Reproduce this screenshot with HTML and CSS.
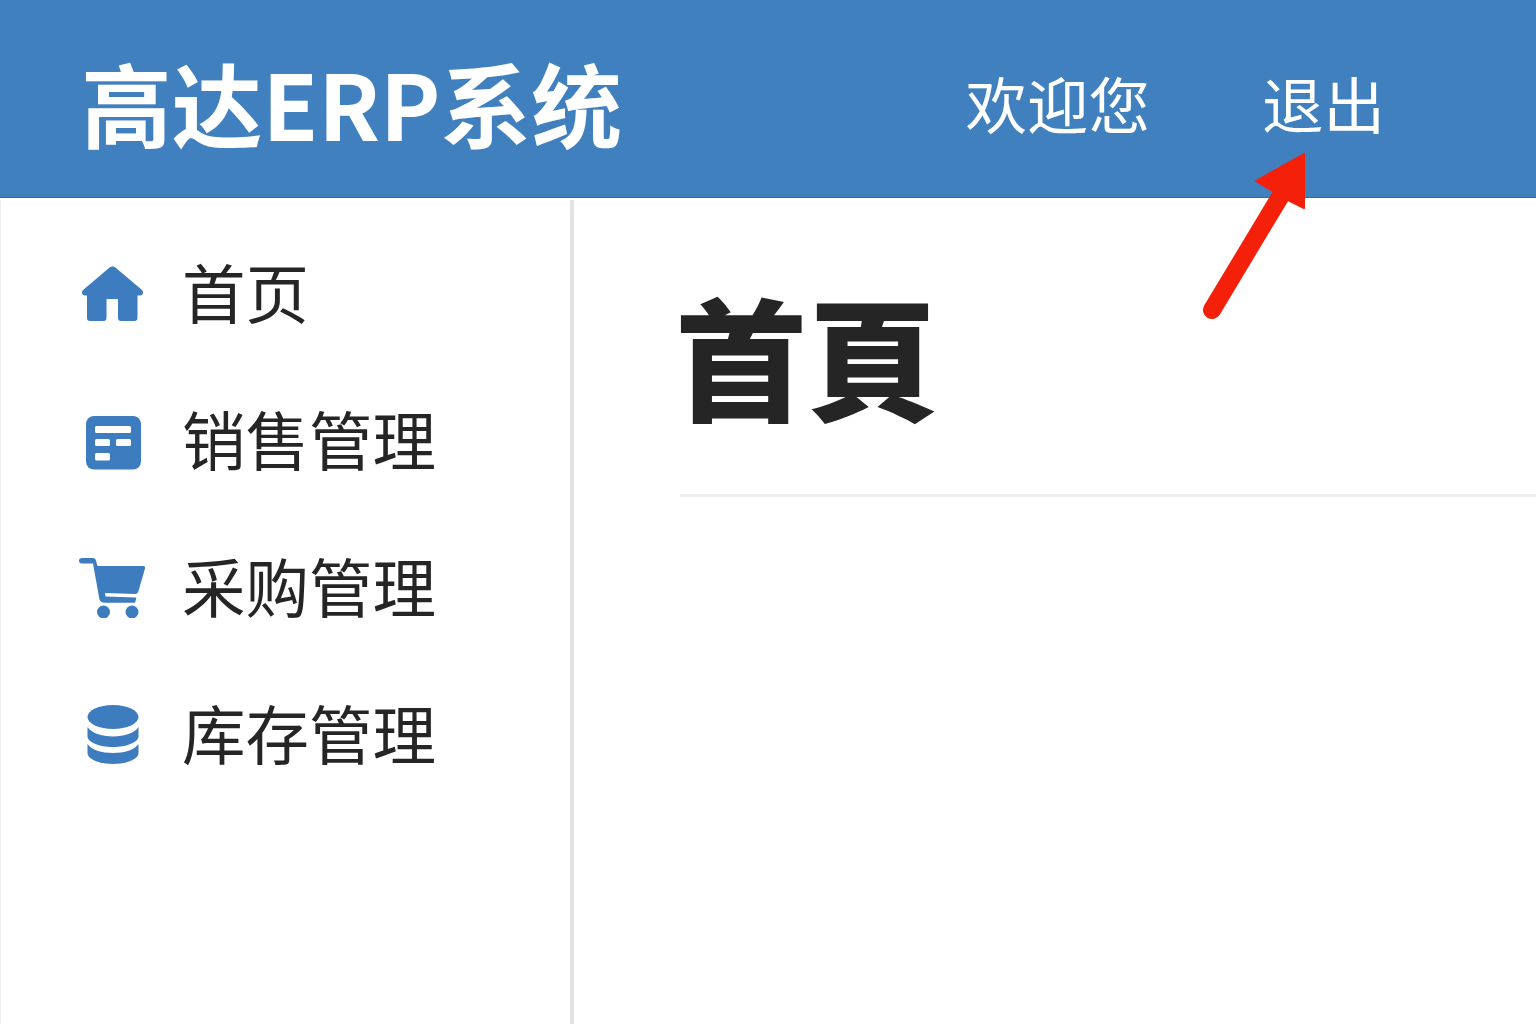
FILE: index.html
```html
<!DOCTYPE html>
<html lang="zh-CN">
<head>
<meta charset="utf-8">
<title>高达ERP系统</title>
<link rel="stylesheet" href="styles.css">
</head>
<body>
<header class="topbar">
  <div class="brand">高达ERP系统</div>
  <div class="user">
    <span class="welcome">欢迎您</span>
    <a class="logout">退出</a>
  </div>
</header>
<div class="body-row">
  <nav class="sidebar">
    <a class="nav-item">
      <span class="icon"><svg class="glyph" width="62" height="56" viewBox="0 0 62 56"><path d="M30.500 0.500c1.500 0 2.500.5 3.500 1.500L60 24c2 2 1 5.500-2 5.500H55.500V52c0 2-1 3-3 3H39c-2 0-3-1-3-3V33H24.500V52c0 2-1 3-3 3H8c-2 0-3-1-3-3V29.500H3c-3 0-4-3.500-2-5.500L27 2c1-1 2-1.500 3.500-1.500z"/></svg></span>
      <span class="label">首页</span>
    </a>
    <a class="nav-item">
      <span class="icon icon-low"><svg class="glyph" width="55" height="54" viewBox="0 0 55 54"><rect width="55" height="53.500" rx="8"/><g class="cut"><rect x="9" y="10" width="36" height="7" rx="1.500"/><rect x="9" y="23" width="15" height="7" rx="1.500"/><rect x="30" y="23" width="15" height="7" rx="1.500"/><rect x="9" y="37" width="15" height="7.500" rx="1.500"/></g></svg></span>
      <span class="label">销售管理</span>
    </a>
    <a class="nav-item">
      <span class="icon icon-left"><svg class="glyph" width="66" height="60" viewBox="0 0 66 60"><path d="M3 0H13.500c2 0 3 .8 3.500 2.500L18.500 8H64c1.500 0 2.300 1 2 2.500L59.500 33c-.5 2-1.500 3-3.500 3L26 35l.5 3.500 30 1c.8 0 1 .4.8 1L56 44.700H25.500c-2.500 0-4-1-5-3L14 5.500H3C1 5.500 0 4.300 0 2.700S1 0 3 0z"/><circle cx="24.500" cy="54" r="6.500"/><circle cx="53" cy="54" r="6.500"/></svg></span>
      <span class="label">采购管理</span>
    </a>
    <a class="nav-item">
      <span class="icon"><svg class="glyph" width="52" height="59" viewBox="0 0 52 59"><ellipse cx="26" cy="12" rx="25.500" ry="12"/><path d="M.5 22c4 6 14 9.500 25.500 9.500S47.500 28 51.500 22v9.500C51.500 37 40 42 26 42S.5 37 .5 31.500z"/><path d="M.5 39c4 6 14 9 25.500 9s21.500-3 25.500-9v9C51.500 54 40 59 26 59S.5 54 .5 48z"/></svg></span>
      <span class="label">库存管理</span>
    </a>
  </nav>
  <main class="content">
    <h1 class="page-title">首頁</h1>
  </main>
</div>
<svg class="arrow" width="120" height="180" viewBox="1195 145 120 180"><path d="M1212 310L1280 197" stroke="#f5200a" stroke-width="18" stroke-linecap="round" fill="none"/><path d="M1304 154L1256 181L1271 190L1288 200L1304 208Z" fill="#f5200a" stroke="#f5200a" stroke-width="2" stroke-linejoin="round"/></svg>
</body>
</html>
```
FILE: styles.css
```css
html, body {
  margin: 0;
  padding: 0;
  height: 100%;
  overflow: hidden;
  background: #fff;
  font-family: "Noto Sans CJK SC", "Noto Sans", sans-serif;
  color: #252525;
}
body {
  position: relative;
  display: flex;
  flex-direction: column;
}
.topbar {
  flex: 0 0 198px;
  box-sizing: border-box;
  background: #4080bf;
  border-bottom: 1px solid #2a6cb5;
  color: #fff;
  display: flex;
  align-items: center;
  justify-content: space-between;
  padding: 0 151px 8px 81px;
}
.brand {
  font-size: 90.700px;
  font-weight: 700;
  line-height: 1;
  margin-top: 15px;
}
.user {
  display: flex;
  gap: 112px;
  font-size: 61.500px;
  line-height: 1;
  font-weight: 400;
  margin-top: 16px;
}
.body-row {
  flex: 1;
  display: flex;
  min-height: 0;
  padding-top: 2px;
}
.sidebar {
  width: 574px;
  box-sizing: border-box;
  border-right: 4px solid #e2e2e2;
  border-left: 1px solid #efefef;
  padding-top: 20px;
  display: flex;
  flex-direction: column;
}
.nav-item {
  height: 147px;
  display: flex;
  align-items: center;
  font-size: 63.500px;
  line-height: 1;
}
.icon {
  width: 66px;
  margin: 0 36px 0 79px;
  display: flex;
  justify-content: center;
}
.icon-low {
  padding-top: 4px;
}
.icon-left {
  margin-left: 78px;
  margin-right: 37px;
}
.glyph {
  display: block;
  fill: #3d7dbf;
}
.cut {
  fill: #fff;
}
.label {
  padding-bottom: 5px;
}
.content {
  flex: 1;
  padding: 88px 0 0 106px;
}
.page-title {
  margin: 0;
  font-size: 132px;
  font-weight: 900;
  line-height: 1;
  text-indent: -5px;
  height: 206px;
  border-bottom: 3px solid #eeeeee;
  font-family: "Noto Sans CJK TC", sans-serif;
}
.arrow {
  position: absolute;
  left: 1195px;
  top: 145px;
}
```
